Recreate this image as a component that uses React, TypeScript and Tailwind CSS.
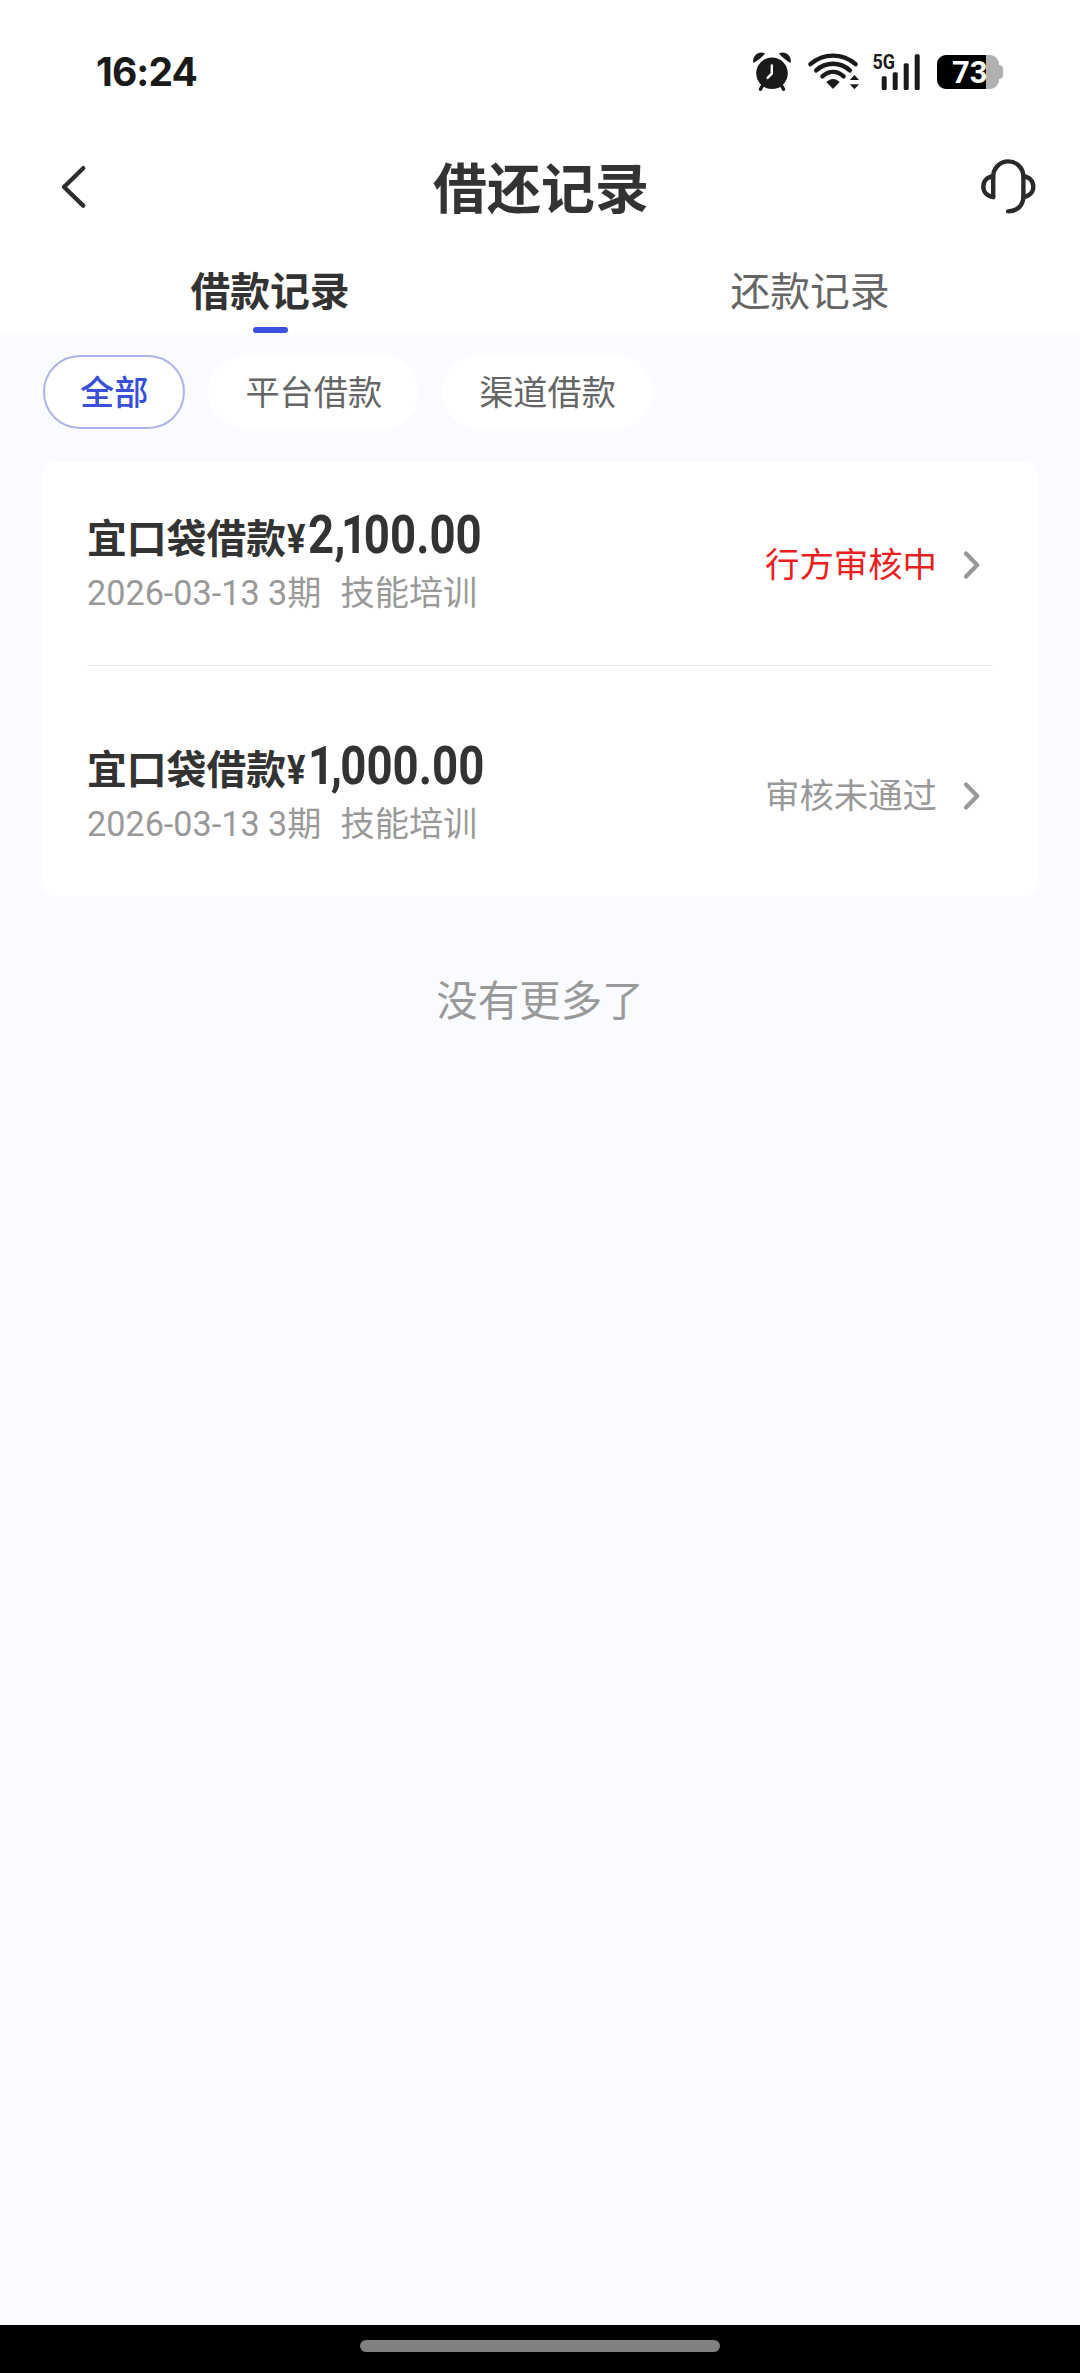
import { useState } from 'react';
import clsx from 'clsx';

type Loan = {
  id: number;
  name: string;
  amount: string;
  date: string;
  periods: number;
  purpose: string;
  status: string;
  pending: boolean;
};

const TABS = ['借款记录', '还款记录'];
const FILTERS = ['全部', '平台借款', '渠道借款'];

const LOANS: Loan[] = [
  {
    id: 1,
    name: '宜口袋借款',
    amount: '2,100.00',
    date: '2026-03-13',
    periods: 3,
    purpose: '技能培训',
    status: '行方审核中',
    pending: true,
  },
  {
    id: 2,
    name: '宜口袋借款',
    amount: '1,000.00',
    date: '2026-03-13',
    periods: 3,
    purpose: '技能培训',
    status: '审核未通过',
    pending: false,
  },
];

function AlarmIcon() {
  return (
    <svg width="38" height="40" viewBox="0 0 38 40" className="text-[#1a1a1a]">
      <path
        d="M1 10C-0.2 4.6 5 0 11 1.6Q8 5.5 1 10Z M37 10C38.2 4.6 33 0 27 1.6Q30 5.5 37 10Z"
        fill="currentColor"
        stroke="currentColor"
        strokeWidth="1.4"
        strokeLinejoin="round"
      />
      <circle cx="19" cy="21.3" r="15.8" fill="currentColor" />
      <path d="M10.5 32 7.5 37.2M27.5 32l3 5.2" stroke="currentColor" strokeWidth="3.4" strokeLinecap="round" />
      <path d="M18.8 13.5v8.2l-4.2 4.2" fill="none" stroke="#fff" strokeWidth="2.4" strokeLinecap="round" strokeLinejoin="round" />
    </svg>
  );
}

function WifiIcon() {
  return (
    <svg width="52" height="40" viewBox="0 0 52 40" className="text-[#1a1a1a]">
      <g fill="none" stroke="currentColor" strokeWidth="4.4" strokeLinecap="round">
        <path d="M3.4 12.2C16.6 0.8 35.4 0.8 48.6 12.2" />
        <path d="M9.2 18.4C18.8 9.6 33.2 9.6 42.8 18.4" />
        <path d="M15.4 24.4C21.6 18.4 30.4 18.4 36.6 24.4" />
      </g>
      <path d="M19.9 30.2C23.4 26.6 28.6 26.6 32.1 30.2L26 36.4Z" fill="currentColor" stroke="currentColor" strokeWidth="1" strokeLinejoin="round" />
      <path d="M47.4 23 52 27.9H42.8ZM47.4 37.2 52 32.2H42.8Z" fill="currentColor" />
    </svg>
  );
}

function SignalIcon() {
  return (
    <svg width="49" height="46" viewBox="0 -6 49 46" fill="#1a1a1a" className="-mt-[6px]">
      <text x="0.5" y="17" fontSize="20.5" fontWeight="700" fontFamily="Roboto, sans-serif" textLength="22.5" lengthAdjust="spacingAndGlyphs">
        5G
      </text>
      <rect x="9.7" y="24.2" width="5" height="13.8" rx="1.5" />
      <rect x="20.7" y="20.2" width="5" height="17.8" rx="1.5" />
      <rect x="31.7" y="11.2" width="5" height="26.8" rx="1.5" />
      <rect x="42.7" y="2.2" width="5" height="35.8" rx="1.5" />
    </svg>
  );
}

function Battery({ level }: { level: number }) {
  return (
    <div className="flex items-center">
      <div className="relative h-[34px] w-[62px] rounded-[9px] bg-[#b0b0b0]">
        <div className="h-full rounded-l-[9px] bg-black" style={{ width: `${level * 1.08}%` }} />
        <span className="absolute -top-px left-[15px] font-[Roboto,sans-serif] text-[31px] leading-[38px] font-bold text-white">
          {level}
        </span>
      </div>
      <div className="h-[14px] w-[4px] rounded-r-[4px] bg-[#b0b0b0]" />
    </div>
  );
}

function StatusBar() {
  return (
    <div className="flex h-[140px] items-start justify-between pr-[77px] pl-[96px]">
      <span className="mt-[48px] font-[Inter,sans-serif] text-[39px] leading-[48px] font-bold tracking-[-0.9px] text-[#1a1a1a]">
        16:24
      </span>
      <div className="mt-[52px] flex h-[40px] items-center">
        <AlarmIcon />
        <div className="ml-[16px]">
          <WifiIcon />
        </div>
        <div className="ml-[13px]">
          <SignalIcon />
        </div>
        <div className="ml-[16px]">
          <Battery level={73} />
        </div>
      </div>
    </div>
  );
}

function Header() {
  return (
    <header className="flex h-[94px] items-center justify-between pr-[43px] pl-[59px]">
      <button type="button" aria-label="返回" className="w-[44px]">
        <svg width="28" height="44" viewBox="0 0 28 44" fill="none">
          <path d="M24.2 3.2 5 22l19.2 18.6" stroke="#2e2e2e" strokeWidth="4.4" strokeLinecap="round" strokeLinejoin="round" />
        </svg>
      </button>
      <h1 className="pb-[3px] text-[54px] leading-none font-bold text-[#333]">借还记录</h1>
      <button type="button" aria-label="客服" className="w-[58px]">
        <svg width="58" height="58" viewBox="0 0 58 58" fill="none" stroke="#2a2a2a" strokeWidth="4.4" strokeLinecap="round" strokeLinejoin="round">
          <path d="M14.2 39V18.5a15.1 15.1 0 0 1 30.2 0V38c0 9.5-6 15.2-15.3 15.4" />
          <path d="M14.2 18.2C7.8 19 4.3 23.2 4.3 28.6S7.8 38.2 14.2 39" />
          <path d="M44.4 18.2c6.4.8 9.9 5 9.9 10.4s-3.5 9.6-9.9 10.4" />
        </svg>
      </button>
    </header>
  );
}

// Proportional figures: the "1" and the separators sit tighter than the other digits.
function Amount({ value }: { value: string }) {
  return (
    <span className="text-[53px] leading-[56px]">
      {value.split('').map((ch, i) => (
        <span key={i} className={clsx(ch === '1' && '-mr-[4px] -ml-[3px] first:ml-0', ch === ',' && '-mr-[2px]')}>
          {ch}
        </span>
      ))}
    </span>
  );
}

function LoanRow({ loan }: { loan: Loan }) {
  return (
    <li className="flex h-[202px] items-center justify-between pr-[12px]">
      <div>
        <div className="-mt-[2px] mb-[4px] flex items-baseline font-bold text-[#333]">
          <span className="text-[39.8px] leading-[56px]">{loan.name}</span>
          <span className="ml-px flex h-[56px] origin-left scale-x-[0.86] items-baseline font-[Roboto,sans-serif]">
            <span className="mr-[3px] text-[40px] leading-[56px]">¥</span>
            <Amount value={loan.amount} />
          </span>
        </div>
        <div className="flex items-baseline font-[Roboto,'Noto_Sans_CJK_SC',sans-serif] text-[34.2px] leading-[50px] text-[#999]">
          <span>
            {loan.date} {loan.periods}期
          </span>
          <span className="ml-[19px]">{loan.purpose}</span>
        </div>
      </div>
      <div className="flex items-center">
        <span
          className={clsx(
            'pb-[3px] text-[34.4px] leading-[50px]',
            loan.pending ? 'text-[#ea2020]' : 'text-[#999]',
          )}
        >
          {loan.status}
        </span>
        <svg width="18" height="30" viewBox="0 0 18 30" fill="none" className="mt-[3px] ml-[26px]">
          <path d="M3 3.5 14.2 15 3 26.5" stroke="#999" strokeWidth="4.2" strokeLinecap="round" strokeLinejoin="round" />
        </svg>
      </div>
    </li>
  );
}

export default function App() {
  const [tab, setTab] = useState(0);
  const [filter, setFilter] = useState(0);

  return (
    <div className="flex h-[2373px] w-[1080px] flex-col bg-[#fafbff] font-['Noto_Sans_CJK_SC',sans-serif]">
      <div className="bg-white">
        <StatusBar />
        <Header />
        <nav className="grid h-[99px] grid-cols-2">
          {TABS.map((label, i) => (
            <button
              key={label}
              type="button"
              onClick={() => setTab(i)}
              className={clsx(
                'flex flex-col items-center justify-between pt-[25px] text-[39.8px] leading-[60px]',
                tab === i ? 'font-bold text-[#333]' : 'text-[#666]',
              )}
            >
              {label}
              {tab === i && <span className="h-[6px] w-[35px] rounded-full bg-[#3b50df]" />}
            </button>
          ))}
        </nav>
      </div>

      <div className="flex gap-[23px] px-[43px] pt-[22px]">
        {FILTERS.map((label, i) => (
          <button
            key={label}
            type="button"
            onClick={() => setFilter(i)}
            className={clsx(
              'flex h-[74px] items-center rounded-full border-2 bg-white px-[35px] pb-[4px] text-[34.2px] leading-[50px]',
              filter === i ? 'border-[#adb4e8] font-medium text-[#3a50d9]' : 'border-white text-[#666]',
            )}
          >
            {label}
          </button>
        ))}
      </div>

      <ul className="mx-[43px] mt-[33px] rounded-[12px] bg-white px-[44px] pb-px">
        <LoanRow loan={LOANS[0]} />
        <li className="mt-px mb-[27px] h-px bg-[#ebebeb]" />
        <LoanRow loan={LOANS[1]} />
      </ul>

      <p className="mt-[72px] text-center text-[41.5px] leading-[60px] text-[#999]">没有更多了</p>

      <div className="mt-auto flex h-[48px] justify-center bg-black pt-[15px]">
        <div className="h-[12px] w-[360px] rounded-full bg-[#808080]" />
      </div>
    </div>
  );
}
